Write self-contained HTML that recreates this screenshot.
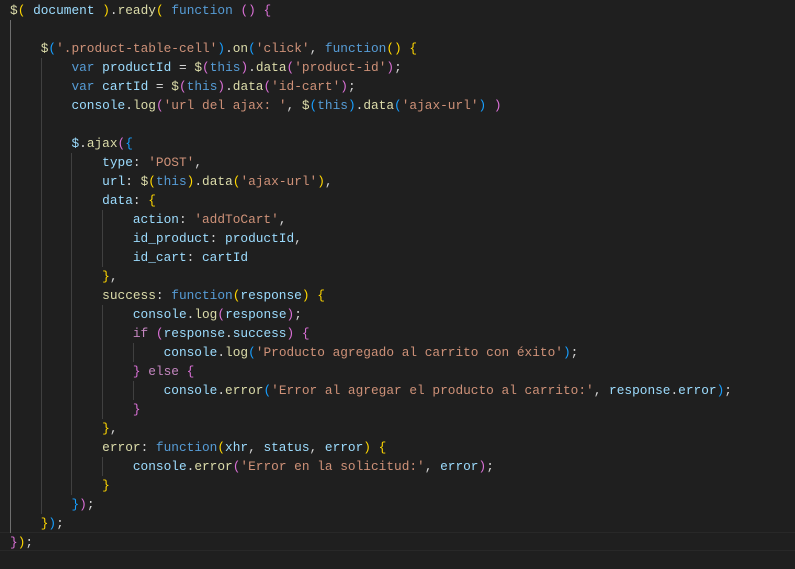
<!DOCTYPE html>
<html><head><meta charset="utf-8"><style>
html,body{margin:0;padding:0;background:#1f1f1f;width:795px;height:569px;overflow:hidden}
#c{position:absolute;left:10px;top:1px;font-family:"Liberation Mono",monospace;font-size:12.8px;line-height:19px;color:#d4d4d4}
.l{height:19px;white-space:pre}
.g,.g0{display:inline-block;height:19px;vertical-align:top;box-shadow:inset 1px 0 #404040}
.g0{box-shadow:inset 1px 0 #6e6e6e}
.k{color:#569cd6}.v{color:#9cdcfe}.f{color:#dcdcaa}.s{color:#ce9178}.c{color:#c586c0}
.a{color:#ffd700}.b{color:#da70d6}.d{color:#179fff}
#hl{position:absolute;left:0;top:532px;width:795px;height:17px;border-top:1px solid #282828;border-bottom:1px solid #282828}
</style></head><body>
<div id="hl"></div>
<div id="c"><div class="l"><span class="f">$</span><span class="a">(</span> <span class="v">document</span> <span class="a">)</span>.<span class="f">ready</span><span class="a">(</span> <span class="k">function</span> <span class="b">()</span> <span class="b">{</span></div><div class="l"><span class="g0">    </span></div><div class="l"><span class="g0">    </span><span class="f">$</span><span class="d">(</span><span class="s">'.product-table-cell'</span><span class="d">)</span>.<span class="f">on</span><span class="d">(</span><span class="s">'click'</span>, <span class="k">function</span><span class="a">()</span> <span class="a">{</span></div><div class="l"><span class="g0">    </span><span class="g">    </span><span class="k">var</span> <span class="v">productId</span> = <span class="f">$</span><span class="b">(</span><span class="k">this</span><span class="b">)</span>.<span class="f">data</span><span class="b">(</span><span class="s">'product-id'</span><span class="b">)</span>;</div><div class="l"><span class="g0">    </span><span class="g">    </span><span class="k">var</span> <span class="v">cartId</span> = <span class="f">$</span><span class="b">(</span><span class="k">this</span><span class="b">)</span>.<span class="f">data</span><span class="b">(</span><span class="s">'id-cart'</span><span class="b">)</span>;</div><div class="l"><span class="g0">    </span><span class="g">    </span><span class="v">console</span>.<span class="f">log</span><span class="b">(</span><span class="s">'url del ajax: '</span>, <span class="f">$</span><span class="d">(</span><span class="k">this</span><span class="d">)</span>.<span class="f">data</span><span class="d">(</span><span class="s">'ajax-url'</span><span class="d">)</span> <span class="b">)</span></div><div class="l"><span class="g0">    </span><span class="g">    </span></div><div class="l"><span class="g0">    </span><span class="g">    </span><span class="v">$</span>.<span class="f">ajax</span><span class="b">(</span><span class="d">{</span></div><div class="l"><span class="g0">    </span><span class="g">    </span><span class="g">    </span><span class="v">type</span>: <span class="s">'POST'</span>,</div><div class="l"><span class="g0">    </span><span class="g">    </span><span class="g">    </span><span class="v">url</span>: <span class="f">$</span><span class="a">(</span><span class="k">this</span><span class="a">)</span>.<span class="f">data</span><span class="a">(</span><span class="s">'ajax-url'</span><span class="a">)</span>,</div><div class="l"><span class="g0">    </span><span class="g">    </span><span class="g">    </span><span class="v">data</span>: <span class="a">{</span></div><div class="l"><span class="g0">    </span><span class="g">    </span><span class="g">    </span><span class="g">    </span><span class="v">action</span>: <span class="s">'addToCart'</span>,</div><div class="l"><span class="g0">    </span><span class="g">    </span><span class="g">    </span><span class="g">    </span><span class="v">id_product</span>: <span class="v">productId</span>,</div><div class="l"><span class="g0">    </span><span class="g">    </span><span class="g">    </span><span class="g">    </span><span class="v">id_cart</span>: <span class="v">cartId</span></div><div class="l"><span class="g0">    </span><span class="g">    </span><span class="g">    </span><span class="a">}</span>,</div><div class="l"><span class="g0">    </span><span class="g">    </span><span class="g">    </span><span class="f">success</span>: <span class="k">function</span><span class="a">(</span><span class="v">response</span><span class="a">)</span> <span class="a">{</span></div><div class="l"><span class="g0">    </span><span class="g">    </span><span class="g">    </span><span class="g">    </span><span class="v">console</span>.<span class="f">log</span><span class="b">(</span><span class="v">response</span><span class="b">)</span>;</div><div class="l"><span class="g0">    </span><span class="g">    </span><span class="g">    </span><span class="g">    </span><span class="c">if</span> <span class="b">(</span><span class="v">response</span>.<span class="v">success</span><span class="b">)</span> <span class="b">{</span></div><div class="l"><span class="g0">    </span><span class="g">    </span><span class="g">    </span><span class="g">    </span><span class="g">    </span><span class="v">console</span>.<span class="f">log</span><span class="d">(</span><span class="s">'Producto agregado al carrito con éxito'</span><span class="d">)</span>;</div><div class="l"><span class="g0">    </span><span class="g">    </span><span class="g">    </span><span class="g">    </span><span class="b">}</span> <span class="c">else</span> <span class="b">{</span></div><div class="l"><span class="g0">    </span><span class="g">    </span><span class="g">    </span><span class="g">    </span><span class="g">    </span><span class="v">console</span>.<span class="f">error</span><span class="d">(</span><span class="s">'Error al agregar el producto al carrito:'</span>, <span class="v">response</span>.<span class="v">error</span><span class="d">)</span>;</div><div class="l"><span class="g0">    </span><span class="g">    </span><span class="g">    </span><span class="g">    </span><span class="b">}</span></div><div class="l"><span class="g0">    </span><span class="g">    </span><span class="g">    </span><span class="a">}</span>,</div><div class="l"><span class="g0">    </span><span class="g">    </span><span class="g">    </span><span class="f">error</span>: <span class="k">function</span><span class="a">(</span><span class="v">xhr</span>, <span class="v">status</span>, <span class="v">error</span><span class="a">)</span> <span class="a">{</span></div><div class="l"><span class="g0">    </span><span class="g">    </span><span class="g">    </span><span class="g">    </span><span class="v">console</span>.<span class="f">error</span><span class="b">(</span><span class="s">'Error en la solicitud:'</span>, <span class="v">error</span><span class="b">)</span>;</div><div class="l"><span class="g0">    </span><span class="g">    </span><span class="g">    </span><span class="a">}</span></div><div class="l"><span class="g0">    </span><span class="g">    </span><span class="d">}</span><span class="b">)</span>;</div><div class="l"><span class="g0">    </span><span class="a">}</span><span class="d">)</span>;</div><div class="l"><span class="b">}</span><span class="a">)</span>;</div></div>
</body></html>
